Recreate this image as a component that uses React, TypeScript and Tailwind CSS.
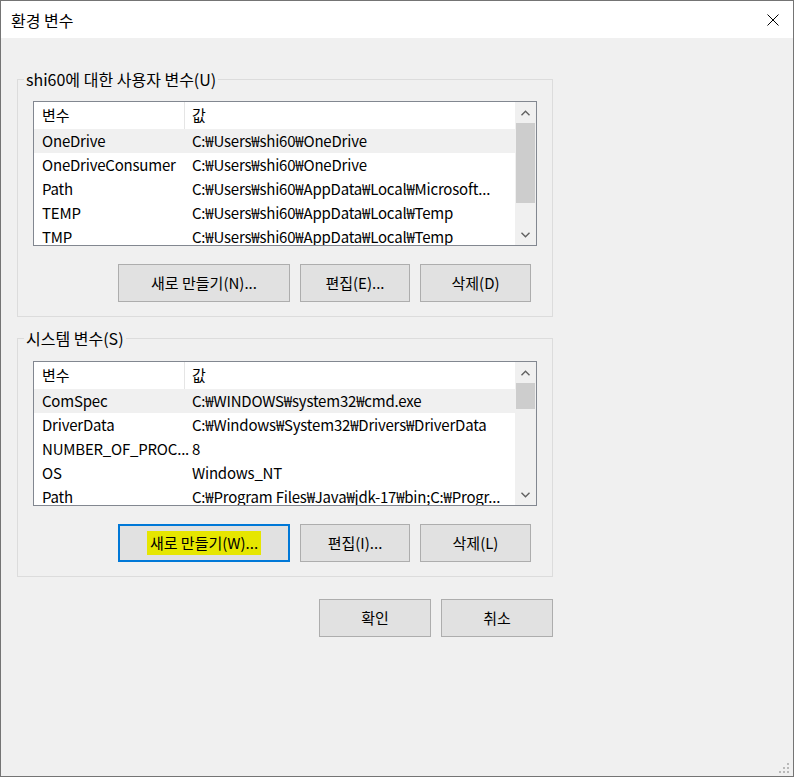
import React from "react";

type EnvRow = { name: string; value: string };

const userVars: EnvRow[] = [
  { name: "OneDrive", value: "C:₩Users₩shi60₩OneDrive" },
  { name: "OneDriveConsumer", value: "C:₩Users₩shi60₩OneDrive" },
  { name: "Path", value: "C:₩Users₩shi60₩AppData₩Local₩Microsoft..." },
  { name: "TEMP", value: "C:₩Users₩shi60₩AppData₩Local₩Temp" },
  { name: "TMP", value: "C:₩Users₩shi60₩AppData₩Local₩Temp" },
];

const systemVars: EnvRow[] = [
  { name: "ComSpec", value: "C:₩WINDOWS₩system32₩cmd.exe" },
  { name: "DriverData", value: "C:₩Windows₩System32₩Drivers₩DriverData" },
  { name: "NUMBER_OF_PROC...", value: "8" },
  { name: "OS", value: "Windows_NT" },
  { name: "Path", value: "C:₩Program Files₩Java₩jdk-17₩bin;C:₩Progr..." },
];

const Chevron = ({ up }: { up?: boolean }) => (
  <svg width="9" height="6" viewBox="0 0 9 6">
    <path
      d={up ? "M0.5 5.2 L4.5 1.2 L8.5 5.2" : "M0.5 0.8 L4.5 4.8 L8.5 0.8"}
      fill="none"
      stroke="#606060"
      strokeWidth="1.4"
    />
  </svg>
);

// fake vertical scrollbar on the right of the list
const ScrollBar = ({ thumb }: { thumb: number }) => (
  <div className="flex w-[21px] shrink-0 flex-col bg-[#f0f0f0]">
    <div className="flex h-[21px] shrink-0 items-center justify-center">
      <Chevron up />
    </div>
    <div className="mx-[1px] shrink-0 bg-[#cdcdcd]" style={{ height: thumb }} />
    <div className="flex-1" />
    <div className="flex h-[21px] shrink-0 items-center justify-center">
      <Chevron />
    </div>
  </div>
);

const VarList = ({ rows, thumb }: { rows: EnvRow[]; thumb: number }) => (
  <div className="flex h-[145px] w-[504px] overflow-hidden border border-[#828790] bg-white">
    <div className="flex min-w-0 flex-1 flex-col">
      <div className="flex h-[27px] shrink-0">
        <div className="flex w-[151px] items-center border-r border-[#e5e5e5] pl-[8px]">변수</div>
        <div className="flex items-center pl-[7px]">값</div>
      </div>
      {rows.map((row, i) => (
        <div
          key={row.name + i}
          className={`flex h-[24px] shrink-0 items-center tracking-[-0.2px] ${
            i === 0 ? "bg-[#f0f0f0]" : ""
          }`}
        >
          <div className="w-[151px] shrink-0 whitespace-nowrap pl-[8px]">{row.name}</div>
          <div className="min-w-0 flex-1 whitespace-nowrap pl-[7px]">{row.value}</div>
        </div>
      ))}
    </div>
    <ScrollBar thumb={thumb} />
  </div>
);

const WinButton = ({
  children,
  width,
  focused,
}: {
  children: React.ReactNode;
  width: string;
  focused?: boolean;
}) => (
  <div
    className={`flex h-[38px] items-center justify-center bg-[#e1e1e1] ${width} ${
      focused ? "border-2 border-[#0078d7]" : "border border-[#adadad]"
    }`}
  >
    {children}
  </div>
);

const Group = ({
  label,
  rows,
  thumb,
  buttons,
  top,
}: {
  label: string;
  rows: EnvRow[];
  thumb: number;
  buttons: React.ReactNode;
  top: string;
}) => (
  <fieldset className="w-[536px] border border-[#dcdcdc]">
    <legend className="ml-[6px] px-[2px] text-[16px] leading-[20px]">{label}</legend>
    <div className={`flex flex-col px-[15px] pb-[14px] ${top}`}>
      <VarList rows={rows} thumb={thumb} />
      <div className="mt-[18px] flex justify-end gap-[10px] pr-[6px]">{buttons}</div>
    </div>
  </fieldset>
);

export default function App() {
  return (
    <div className="h-[777px] w-[795px] bg-white font-['Noto_Sans_CJK_KR',sans-serif] text-[15px] text-black">
      <div className="relative flex h-[777px] w-[794px] flex-col border border-[#747474] bg-[#f0f0f0]">
        {/* Title bar */}
        <div className="flex h-[37px] shrink-0 items-center justify-between bg-white pl-[10px] pr-[14px]">
          <span className="text-[16px] leading-[20px]">환경 변수</span>
          <svg width="12" height="12" viewBox="0 0 12 12">
            <path d="M0.5 0.5 L11.5 11.5 M11.5 0.5 L0.5 11.5" stroke="#000" strokeWidth="1" />
          </svg>
        </div>

        {/* Body */}
        <div className="flex flex-col pl-[16px]">
          <div className="mt-[31px]">
            <Group
              label="shi60에 대한 사용자 변수(U)"
              rows={userVars}
              thumb={80}
              top="pt-[12px]"
              buttons={
                <>
                  <WinButton width="w-[172px]">새로 만들기(N)...</WinButton>
                  <WinButton width="w-[110px]">편집(E)...</WinButton>
                  <WinButton width="w-[111px]">삭제(D)</WinButton>
                </>
              }
            />
          </div>

          <div className="mt-[11px]">
            <Group
              label="시스템 변수(S)"
              rows={systemVars}
              thumb={26}
              top="pt-[13px]"
              buttons={
                <>
                  <WinButton width="w-[172px]" focused>
                    <span className="bg-[#e6e600] px-[3px] leading-[24px]">새로 만들기(W)...</span>
                  </WinButton>
                  <WinButton width="w-[110px]">편집(I)...</WinButton>
                  <WinButton width="w-[111px]">삭제(L)</WinButton>
                </>
              }
            />
          </div>

          <div className="mt-[22px] flex w-[536px] justify-end gap-[10px]">
            <WinButton width="w-[112px]">확인</WinButton>
            <WinButton width="w-[112px]">취소</WinButton>
          </div>
        </div>

        {/* resize grip */}
        <svg className="absolute bottom-[1px] right-[2px]" width="12" height="12" viewBox="0 0 12 12">
          <g fill="#b9b9b9">
            <rect x="8" y="0" width="2" height="2" />
            <rect x="4" y="4" width="2" height="2" />
            <rect x="8" y="4" width="2" height="2" />
            <rect x="0" y="8" width="2" height="2" />
            <rect x="4" y="8" width="2" height="2" />
            <rect x="8" y="8" width="2" height="2" />
          </g>
        </svg>
      </div>
    </div>
  );
}
